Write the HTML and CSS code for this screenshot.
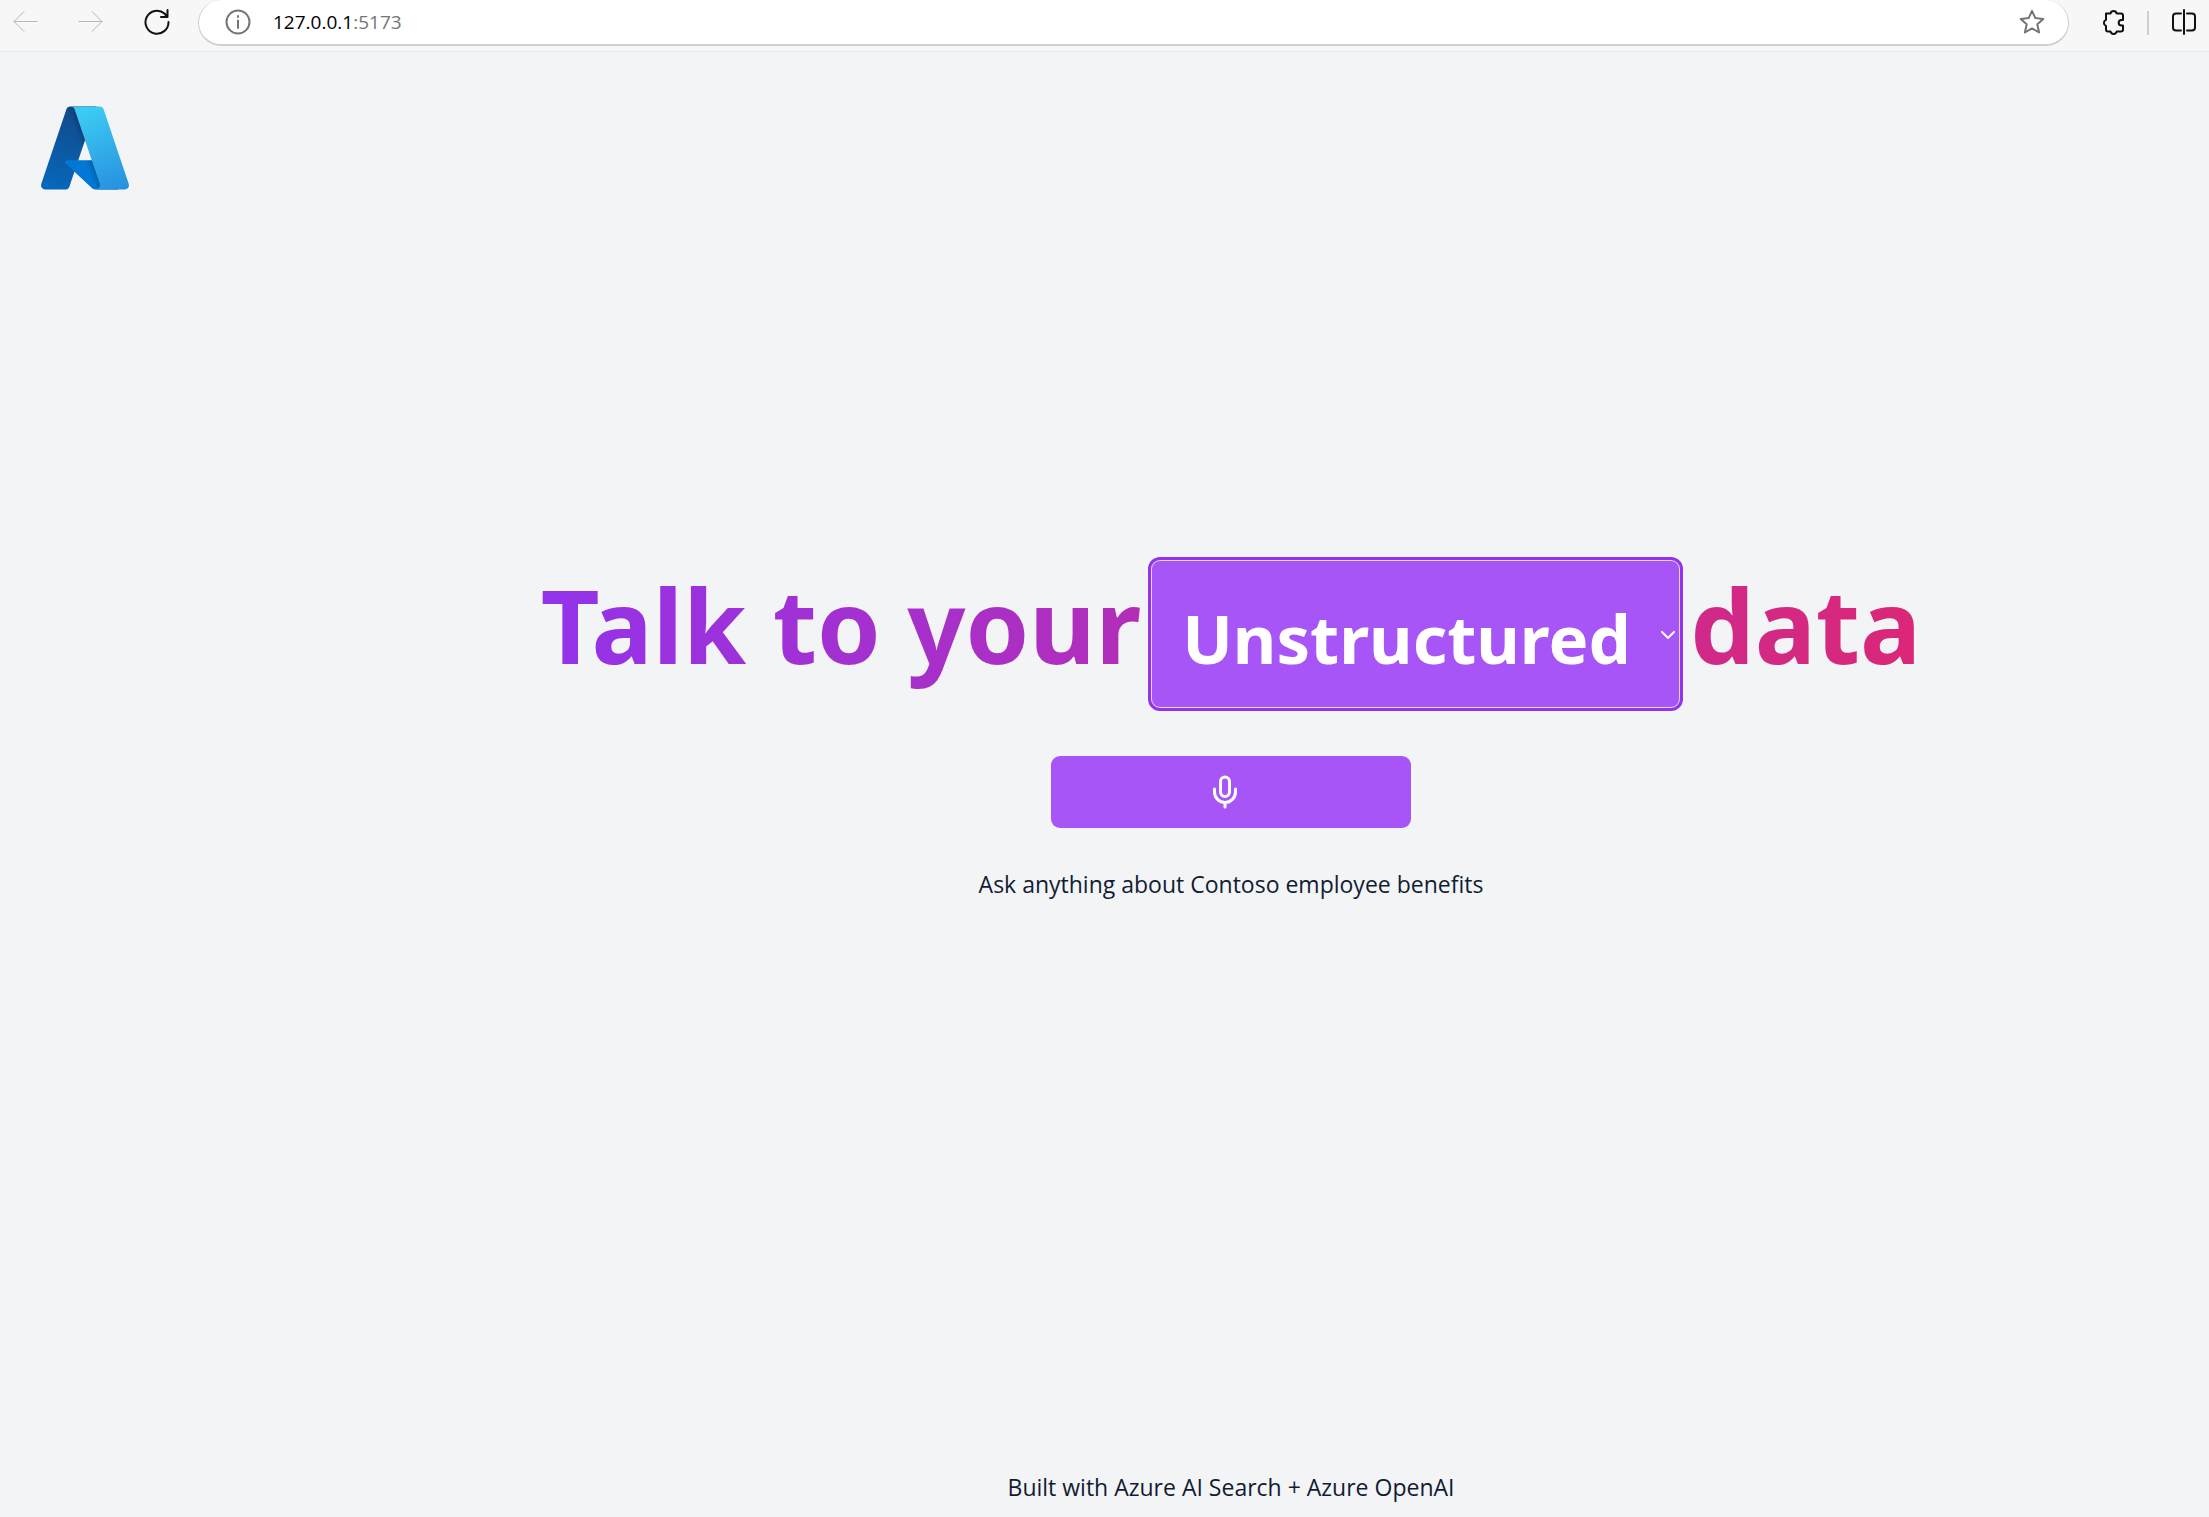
FILE: index.html
```html
<!DOCTYPE html>
<html lang="en">
<head>
<meta charset="utf-8">
<title>Talk to your data</title>
<link rel="stylesheet" href="styles.css">
</head>
<body>
<header class="toolbar">
  <nav class="nav">
    <button class="tool muted" type="button" aria-label="Back"><svg width="26" height="26" viewBox="0 0 26 26"><path d="M25 12.500H2M12 2.500 2 12.500l10 10"/></svg></button>
    <button class="tool muted" type="button" aria-label="Forward"><svg width="26" height="26" viewBox="0 0 26 26"><path d="M1 12.500h23M14 2.500l10 10-10 10"/></svg></button>
    <button class="tool strong" type="button" aria-label="Reload"><svg width="26" height="26" viewBox="0 0 26 26"><path d="M24.500 13A11.500 11.500 0 1 1 20.500 4.500L23 7.500M23.500 1v7H17"/></svg></button>
  </nav>
  <div class="address">
    <svg class="info" width="26" height="26" viewBox="0 0 26 26"><circle cx="13" cy="13" r="11.500"/><path d="M13 11.500V19M13 7v1"/></svg>
    <p class="url">127.0.0.1<span class="port">:5173</span></p>
    <button class="tool star" type="button" aria-label="Add to favorites"><svg width="26" height="26" viewBox="0 0 26 26"><path d="m13 1.800 3.300 7.300 8 .9-6 5.300 1.800 8.200-7.100-4.100-7.100 4.100 1.800-8.200-6-5.300 8-.9z"/></svg></button>
  </div>
  <div class="extras">
    <button class="tool strong" type="button" aria-label="Extensions"><svg width="24" height="26" viewBox="0 0 24 26"><path d="M5 4.500h4.500a3.200 3.200 0 0 1 6.200 0H20q2 0 2 2V11h-1.500a2.800 2.800 0 0 0 0 5.600H22v4q0 2-2 2h-4.300a3.200 3.200 0 0 1-6.200 0H7q-2 0-2-2v-3.700a3.200 3.200 0 0 1 0-6z"/></svg></button>
    <span class="divider"></span>
    <button class="tool strong" type="button" aria-label="Split screen"><svg width="26" height="26" viewBox="0 0 26 26"><path d="M13 1v24M10 4.500H5q-3 0-3 3v11q0 3 3 3h5M16 4.500h5q3 0 3 3v11q0 3-3 3h-5"/></svg></button>
  </div>
</header>
<div class="app">
  <div class="brand">
    <svg width="96" height="96" viewBox="0 0 96 96" role="img" aria-label="Azure">
      <defs>
        <linearGradient id="left" x1="-1032.172" x2="-1059.213" y1="145.312" y2="65.426" gradientTransform="matrix(1 0 0 -1 1075 158)" gradientUnits="userSpaceOnUse"><stop offset="0" stop-color="#114a8b"/><stop offset="1" stop-color="#0669bc"/></linearGradient>
        <linearGradient id="shade" x1="-1023.725" x2="-1029.980" y1="108.083" y2="105.968" gradientTransform="matrix(1 0 0 -1 1075 158)" gradientUnits="userSpaceOnUse"><stop offset="0" stop-opacity=".3"/><stop offset=".071" stop-opacity=".2"/><stop offset=".321" stop-opacity=".1"/><stop offset=".623" stop-opacity=".05"/><stop offset="1" stop-opacity="0"/></linearGradient>
        <linearGradient id="right" x1="-1027.165" x2="-997.482" y1="147.642" y2="68.561" gradientTransform="matrix(1 0 0 -1 1075 158)" gradientUnits="userSpaceOnUse"><stop offset="0" stop-color="#3ccbf4"/><stop offset="1" stop-color="#2892df"/></linearGradient>
      </defs>
      <path fill="url(#left)" d="M33.338 6.544h26.038l-27.030 80.087a4.152 4.152 0 0 1-3.933 2.824H8.149a4.145 4.145 0 0 1-3.928-5.470L29.404 9.368a4.152 4.152 0 0 1 3.934-2.825z"/>
      <path fill="#0078d4" d="M71.175 60.261h-41.290a1.911 1.911 0 0 0-1.305 3.309l26.532 24.764a4.171 4.171 0 0 0 2.846 1.121h23.380z"/>
      <path fill="url(#shade)" d="M33.338 6.544a4.118 4.118 0 0 0-3.943 2.879L4.252 83.917a4.140 4.140 0 0 0 3.908 5.538h20.787a4.443 4.443 0 0 0 3.410-2.900l5.014-14.777 17.910 16.705a4.237 4.237 0 0 0 2.666.972H81.240L71.024 60.261l-29.781.007L59.470 6.544z"/>
      <path fill="url(#right)" d="M66.595 9.364a4.145 4.145 0 0 0-3.928-2.820H33.648a4.146 4.146 0 0 1 3.928 2.820l25.184 74.620a4.146 4.146 0 0 1-3.928 5.472h29.020a4.146 4.146 0 0 0 3.927-5.472z"/>
    </svg>
  </div>
  <div class="page">
    <main class="main">
      <h1 class="title">
        <span>Talk to your</span>
        <span class="picker">
          <select class="select" aria-label="Data type"><option>Unstructured</option></select>
          <svg class="chevron" width="16" height="10" viewBox="0 0 16 10"><path d="m2 2 6 6 6-6"/></svg>
        </span>
        <span>data</span>
      </h1>
      <button class="record" type="button" aria-label="Start recording"><svg width="36" height="36" viewBox="0 0 24 24"><path d="M12 2a3 3 0 0 0-3 3v7a3 3 0 0 0 6 0V5a3 3 0 0 0-3-3ZM19 10v2a7 7 0 0 1-14 0v-2M12 19v3"/></svg></button>
      <p class="hint">Ask anything about Contoso employee benefits</p>
    </main>
    <footer class="footer">Built with Azure AI Search + Azure OpenAI</footer>
  </div>
</div>
</body>
</html>
```

FILE: styles.css
```css
* { box-sizing: border-box; }
body {
  margin: 0;
  min-height: 100vh;
  display: flex;
  flex-direction: column;
  background: #f3f4f6;
  color: #111c33;
  font-family: "Segoe UI", "Open Sans", sans-serif;
  font-size: 23px;
  line-height: 36px;
}
p, h1 { margin: 0; }
svg { display: block; fill: none; stroke-linecap: round; stroke-linejoin: round; }
button { padding: 0; border: 0; background: none; font: inherit; }

.toolbar {
  display: flex;
  align-items: flex-start;
  height: 52px;
  background: #f7f7f7;
  border-bottom: 1px solid #e6e7e8;
}
.nav { display: flex; gap: 40px; padding: 9px 28px 0 12px; }
.tool svg, .info { stroke: currentColor; stroke-width: 2; }
.tool.muted svg { stroke-width: 1; }
.muted { color: #b8b8b8; }
.strong { color: #111; }
.star, .info { color: #757575; }
.address {
  flex: 1;
  display: flex;
  align-items: center;
  height: 46px;
  padding: 0 23px 0 26px;
  background: #fff;
  border: 1px solid #cfcfcf;
  border-width: 0 1px 2px;
  border-radius: 23px;
}
.url { flex: 1; padding-left: 22px; font-size: 19px; line-height: 24px; color: #000; }
.port { color: #757575; }
.extras { display: flex; gap: 22px; padding: 9px 12px 0 32px; }
.divider { width: 2px; height: 24px; margin-top: 2px; background: #cfcfcf; }

.app { flex: 1; display: grid; grid-template-columns: 253px 1fr; }
.brand { padding: 48px 0 0 37px; }
.page { display: flex; flex-direction: column; align-items: center; }
.main {
  flex: 1;
  display: flex;
  flex-direction: column;
  align-items: center;
  justify-content: center;
  padding-bottom: 36px;
}
.title {
  display: flex;
  align-items: baseline;
  gap: 10px;
  margin-bottom: 48px;
  background: linear-gradient(to right, #9333ea, #db2777);
  background-clip: text;
  -webkit-background-clip: text;
  color: transparent;
  font-family: "Segoe UI", "Noto Sans", sans-serif;
  font-size: 102px;
  line-height: 108px;
  font-weight: 700;
  white-space: nowrap;
}
.picker { position: relative; }
.select {
  appearance: none;
  display: block;
  height: 148px;
  padding: 8px 48px 0 30px;
  background: #a855f7;
  border: 1px solid #e4d4f7;
  border-radius: 9px;
  outline: 3px solid #9333ea;
  color: #fff;
  font: inherit;
  font-size: 67px;
}
.chevron {
  position: absolute;
  top: 70px;
  right: 4px;
  stroke: #fff;
  stroke-width: 2;
  pointer-events: none;
}
.record {
  display: flex;
  align-items: center;
  justify-content: center;
  width: 360px;
  height: 72px;
  padding-right: 12px;
  margin-bottom: 38px;
  background: #a855f7;
  border-radius: 9px;
}
.record svg { stroke: #fff; stroke-width: 2; }
.footer { padding: 24px; padding-bottom: 12px; }
```
